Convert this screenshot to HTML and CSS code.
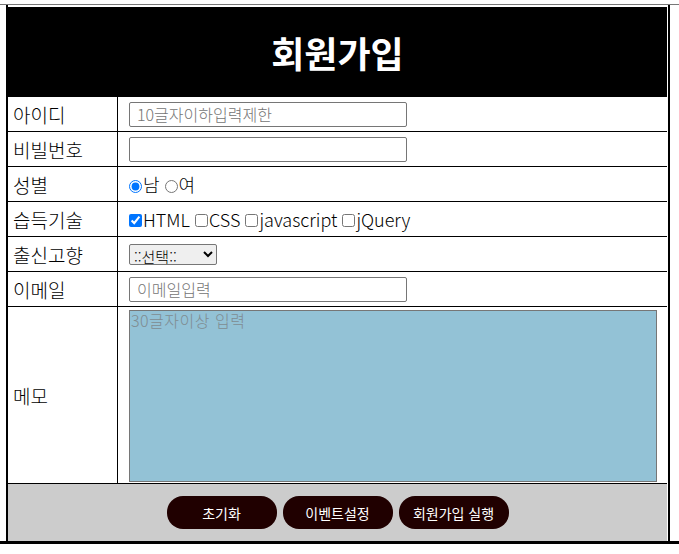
FILE: index.html
```html
<!DOCTYPE html>
<html lang="ko">
<head>
<meta charset="utf-8">
<title>회원가입</title>
<link rel="stylesheet" href="styles.css">
</head>
<body>
<div class="page">
  <div class="frame">
    <form class="join">
      <table class="join-table">
        <tr>
          <th class="title" colspan="2">회원가입</th>
        </tr>
        <tr>
          <td class="label">아이디</td>
          <td class="field"><input class="text" type="text" placeholder="10글자이하입력제한"></td>
        </tr>
        <tr>
          <td class="label">비빌번호</td>
          <td class="field"><input class="text" type="password"></td>
        </tr>
        <tr>
          <td class="label">성별</td>
          <td class="field opts"><input class="radio" type="radio" name="g" checked>남 <input class="radio" type="radio" name="g">여</td>
        </tr>
        <tr>
          <td class="label">습득기술</td>
          <td class="field opts"><input class="check" type="checkbox" checked>HTML <input class="check" type="checkbox">CSS <input class="check" type="checkbox">javascript <input class="check" type="checkbox">jQuery</td>
        </tr>
        <tr>
          <td class="label">출신고향</td>
          <td class="field"><select class="sel"><option>::선택::</option><option>서울</option><option>부산</option></select></td>
        </tr>
        <tr>
          <td class="label">이메일</td>
          <td class="field"><input class="text" type="text" placeholder="이메일입력"></td>
        </tr>
        <tr>
          <td class="label">메모</td>
          <td class="field memo-cell"><textarea class="memo" placeholder="30글자이상 입력"></textarea></td>
        </tr>
        <tr>
          <td class="actions" colspan="2">
            <div class="btns">
              <button type="reset" class="btn">초기화</button>
              <button type="button" class="btn">이벤트설정</button>
              <button type="submit" class="btn">회원가입 실행</button>
            </div>
          </td>
        </tr>
      </table>
    </form>
  </div>
</div>
</body>
</html>
```

FILE: styles.css
```css
html, body {
  margin: 0;
  padding: 0;
  background: #fff;
}
body {
  font-family: "Noto Sans CJK KR", "Noto Sans", sans-serif;
  color: #000;
}
.page {
  padding-top: 4px;
}
.frame {
  border-top: 1px solid #777;
  border-bottom: 3px solid #000;
}
.join {
  margin: 0;
}
.join-table {
  margin-left: 6px;
  width: 664px;
  border-collapse: separate;
  border-spacing: 0;
  border-left: 2px solid #000;
  border-right: 2px solid #000;
  padding: 2px 1px 0 0;
}
.title {
  background: #000;
  color: #fff;
  height: 90px;
  padding: 0;
  font-size: 36px;
  font-weight: bold;
  text-align: center;
  vertical-align: middle;
}
.label {
  width: 104px;
  height: 34px;
  padding: 0 0 0 5px;
  font-size: 19px;
  font-weight: 300;
  border-right: 1px solid #000;
  border-bottom: 1px solid #000;
  vertical-align: middle;
}
.field {
  padding: 0 0 0 11px;
  border-bottom: 1px solid #000;
  vertical-align: middle;
  font-size: 18px;
}
.text {
  box-sizing: border-box;
  width: 278px;
  height: 25px;
  margin: 0;
  padding: 0 7px;
  border: 1px solid #767676;
  border-radius: 2px;
  font-family: "Noto Sans CJK KR", sans-serif;
  font-size: 16px;
  font-weight: 300;
  display: block;
}
.text::placeholder {
  color: #757575;
}
.opts {
  font-size: 18px;
  font-weight: 300;
}
.radio {
  margin: 0 1px 0 0;
  width: 13px;
  height: 13px;
  vertical-align: -1px;
}
.check {
  margin: 0 1px 0 0;
  width: 13px;
  height: 13px;
  vertical-align: 0;
}
.sel {
  box-sizing: border-box;
  width: 88px;
  height: 21px;
  margin: 0;
  font-family: "Noto Sans CJK KR", sans-serif;
  font-size: 15px;
  font-weight: 300;
  border: 1px solid #767676;
  border-radius: 2px;
  display: block;
}
.memo-cell {
  height: 173px;
  padding-top: 2px;
  padding-bottom: 1px;
}
.memo {
  box-sizing: border-box;
  display: block;
  width: 528px;
  height: 172px;
  margin: 0;
  padding: 0 1px;
  background: #93c2d6;
  border: 1px solid #767676;
  resize: none;
  font-family: "Noto Sans CJK KR", monospace;
  font-size: 16px;
  font-weight: 300;
  line-height: 18px;
  letter-spacing: 0.5px;
}
.memo::placeholder {
  color: #7f8c92;
}
.actions {
  background: #ccc;
  height: 57px;
  padding: 0;
  vertical-align: middle;
}
.btns {
  display: flex;
  justify-content: center;
  gap: 6px;
}
.btn {
  width: 110px;
  height: 33px;
  background: #200000;
  color: #fff;
  border: none;
  border-radius: 16px;
  font-family: "Noto Sans CJK KR", sans-serif;
  font-size: 14px;
  padding: 0;
}
```
